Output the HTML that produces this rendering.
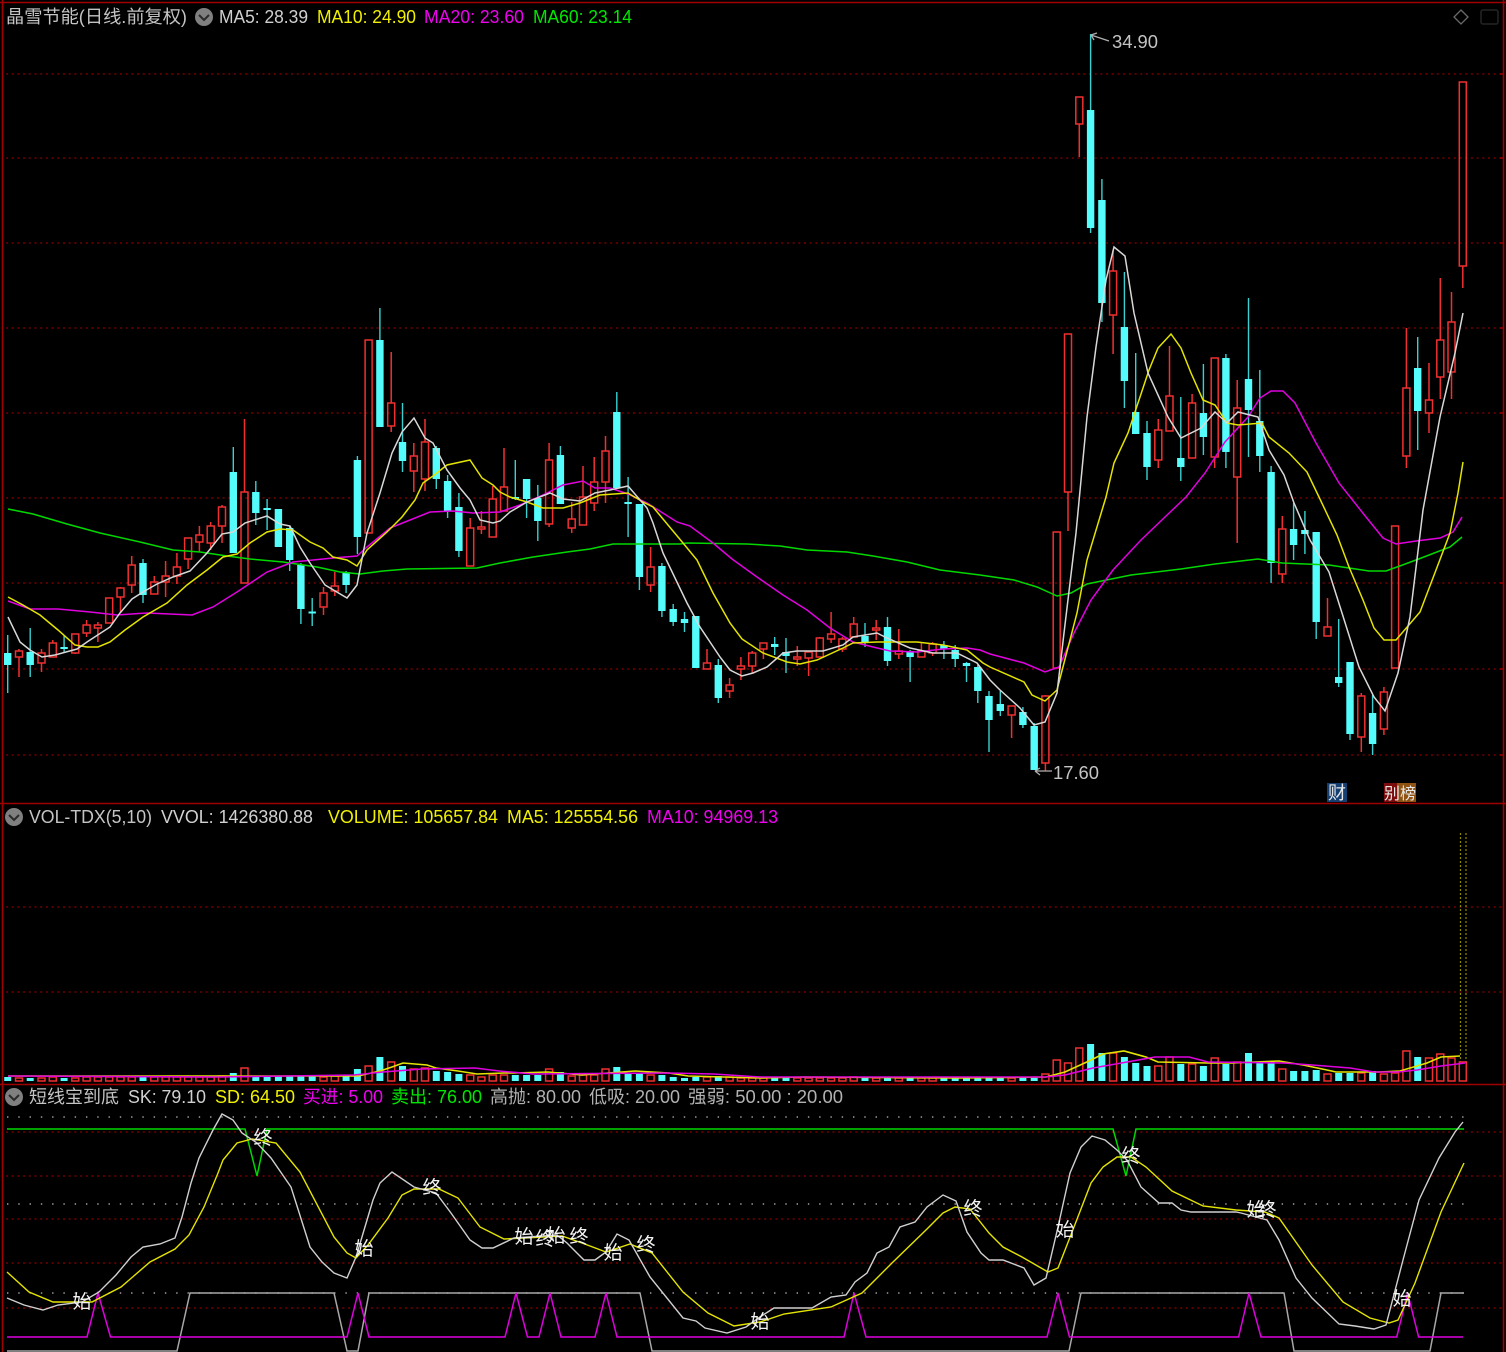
<!DOCTYPE html>
<html lang="zh">
<head>
<meta charset="utf-8">
<title>晶雪节能</title>
<style>
html,body{margin:0;padding:0;background:#000;width:1506px;height:1352px;overflow:hidden}
svg{position:absolute;left:0;top:0;display:block;filter:blur(.35px)}
text{font-family:"Liberation Sans","Noto Sans CJK SC",sans-serif;font-size:18px}
.g{fill:#c4c4c4}.y{fill:#f0f000}.m{fill:#f000f0}.n{fill:#00e800}
.t{font-size:19px;fill:#f4f4f4;text-anchor:middle}
</style>
</head>
<body>
<svg width="1506" height="1352" viewBox="0 0 1506 1352" xmlns="http://www.w3.org/2000/svg">
<rect width="1506" height="1352" fill="#000"/>
<!-- grid -->
<path fill="none" stroke="#8c0000" stroke-width="1.2" stroke-dasharray="2 3.7" d="M6 74H1504M6 158H1504M6 243H1504M6 328H1504M6 413H1504M6 498H1504M6 583H1504M6 669H1504M6 755H1504M6 907H1504M6 992H1504M6 1132H1504M6 1176H1504M6 1219H1504M6 1263H1504M6 1308H1504"/>
<path fill="none" stroke="#a0a0a0" stroke-width="1.4" stroke-dasharray="1.4 9.88" d="M7 1117H1464M7 1204H1464M7 1293H1464"/>
<!-- frame -->
<path fill="none" stroke="#a00000" stroke-width="1.6" d="M0 2.5H1506M2.5 0V1352M1503.5 0V1352M0 803.5H1506M0 1084.5H1506"/>
<path fill="none" stroke="#a00000" stroke-width="1.4" d="M1500 74H1504M1500 158H1504M1500 243H1504M1500 328H1504M1500 413H1504M1500 498H1504M1500 583H1504M1500 669H1504M1500 755H1504"/>

<!-- cyan wicks -->
<path fill="none" stroke="#38d0d0" stroke-width="1.4" d="M7.7 635V693M30.2 628V677M64.1 635V652M143 559V603M233.3 447V553M255.8 481V525M267.1 499V530M278.4 509V547M289.7 526V571M300.9 563V624M312.2 598V626M346.1 571V593M357.4 456V554M379.9 308V427M402.5 403V472M436.3 446V489M447.6 475V518M458.9 493V557M515.3 460V500M526.6 479V518M537.8 485V541M560.4 446V504M616.8 392V488M628.1 477V537M639.4 504V590M661.9 563V617M673.2 604V626M684.5 612V632M695.8 616V668M718.3 659V703M774.7 637V655M786 638V673M865 623V647M887.5 617V666M910.1 650V682M943.9 641V659M955.2 645V667M966.5 662V682M977.8 665V703M989 691V752M1000.3 691V716M1022.9 707V728M1034.2 723V770M1090.6 34V233M1101.9 179V322M1124.4 272V408M1135.7 353V434M1147 421V480M1180.8 397V481M1203.4 364V455M1225.9 354V468M1248.5 298V457M1259.8 370V472M1271.1 466V583M1293.6 503V560M1304.9 511V554M1316.2 532V639M1338.7 619V687M1350 662V740M1372.6 695V755M1417.7 337V450"/>
<!-- cyan bodies -->
<path fill="none" stroke="#54fcfc" stroke-width="7.4" d="M7.7 653V665M30.2 652V665M64.1 647V649M143 563V595M233.3 472V553M255.8 492V513M267.1 508V510M278.4 509V547M289.7 528V560M300.9 565V609M312.2 611.500V613.500M346.1 572V585M357.4 460V537M379.9 340V427M402.5 442V461M436.3 448V479M447.6 481V511M458.9 507V551M515.3 497V499M526.6 479V499M537.8 498V521M560.4 455V504M616.8 412V488M628.1 502V504M639.4 504V577M661.9 566V611M673.2 609V622M684.5 619V623M695.8 616V668M718.3 665V698M774.7 644V647M786 652V656M865 636V642M887.5 627V661M910.1 651V657M943.9 645V649M955.2 650V659M966.5 663V666M977.8 667V691M989 696V720M1000.3 704V711M1022.9 712V725M1034.2 726V770M1090.6 110V228M1101.9 200V303M1124.4 327V381M1135.7 412V434M1147 433V467M1180.8 458V467M1203.4 413V437M1225.9 358V452M1248.5 379V410M1259.8 421V456M1271.1 472V563M1293.6 529V545M1304.9 530V534M1316.2 532V622M1338.7 677V683M1350 662V734M1372.6 713V744M1417.7 368V411"/>
<!-- red candles -->
<path fill="none" stroke="#f03030" stroke-width="1.5" d="M19 649V651M19 657V677M19 651h3.5V657h-7V651h3.5M41.5 649V653M41.5 663V672M41.5 653h3.500V663h-7V653h3.500M52.800 640V643M52.800 643h3.500V657h-7V643h3.500M75.300 653V654M75.300 634h3.500V653h-7V634h3.500M86.600 620V625M86.600 633V637M86.600 625h3.500V633h-7V625h3.500M97.900 622V625M97.900 628V642M97.900 625h3.500V628h-7V625h3.500M109.200 598h3.500V623h-7V598h3.500M120.500 587V588M120.500 597V613M120.500 588h3.500V597h-7V588h3.500M131.700 556V565M131.700 585V593M131.700 565h3.500V585h-7V565h3.500M154.300 576V582M154.300 582h3.500V594h-7V582h3.500M165.600 561V576M165.600 582V597M165.600 576h3.500V582h-7V576h3.500M176.900 553V567M176.900 576V584M176.900 567h3.500V576h-7V567h3.500M188.100 559V569M188.100 538h3.500V559h-7V538h3.500M199.400 526V535M199.400 542V552M199.400 535h3.500V542h-7V535h3.500M210.700 522V526M210.700 543V550M210.700 526h3.500V543h-7V526h3.500M222 505V507M222 526V543M222 507h3.500V526h-7V507h3.500M244.500 419V492M244.500 492h3.500V583h-7V492h3.500M323.500 587V593M323.500 607V615M323.500 593h3.500V607h-7V593h3.500M334.800 572V586M334.800 591V596M334.800 586h3.500V591h-7V586h3.500M368.600 340h3.500V533h-7V340h3.500M391.200 352V403M391.200 426V432M391.200 403h3.500V426h-7V403h3.500M413.800 443V456M413.800 471V492M413.800 456h3.500V471h-7V456h3.500M425 419V442M425 479V491M425 442h3.500V479h-7V442h3.500M470.200 518V528M470.200 528h3.500V566h-7V528h3.500M481.400 511V527M481.400 529V534M481.400 527h3.500V529h-7V527h3.500M492.700 486V499M492.700 499h3.500V537h-7V499h3.500M504 448V487M504 487h3.500V511h-7V487h3.500M549.100 443V460M549.100 524V527M549.100 460h3.500V524h-7V460h3.500M571.700 502V519M571.700 528V533M571.700 519h3.500V528h-7V519h3.500M583 466V497M583 497h3.500V525h-7V497h3.500M594.200 457V482M594.200 503V511M594.200 482h3.500V503h-7V482h3.500M605.500 436V451M605.500 482V503M605.500 451h3.500V482h-7V451h3.500M650.600 547V567M650.600 585V592M650.600 567h3.500V585h-7V567h3.500M707 649V663M707 663h3.500V669h-7V663h3.500M729.600 678V685M729.600 691V698M729.600 685h3.500V691h-7V685h3.500M740.900 657V666M740.900 669V680M740.900 666h3.500V669h-7V666h3.500M752.200 651V653M752.200 666V673M752.200 653h3.500V666h-7V653h3.500M763.400 649V659M763.400 643h3.500V649h-7V643h3.500M797.300 646V657M797.300 659V666M797.300 657h3.500V659h-7V657h3.500M808.600 658V676M808.600 652h3.500V658h-7V652h3.500M819.800 637V638M819.800 638h3.500V657h-7V638h3.500M831.100 612V634M831.100 639V643M831.100 634h3.500V639h-7V634h3.500M842.400 637V639M842.400 649V652M842.400 639h3.500V649h-7V639h3.500M853.700 617V624M853.700 624h3.500V637h-7V624h3.500M876.200 620V628M876.200 630V640M876.200 628h3.500V630h-7V628h3.500M898.800 629V651M898.800 654V659M898.800 651h3.500V654h-7V651h3.500M921.400 642V651M921.400 651h3.500V657h-7V651h3.500M932.600 642V644M932.600 653V656M932.600 644h3.500V653h-7V644h3.500M1011.600 715V738M1011.600 706h3.500V715h-7V706h3.500M1045.400 695V696M1045.400 763V771M1045.400 696h3.500V763h-7V696h3.500M1056.700 532h3.500V668h-7V532h3.500M1068 492V531M1068 334h3.500V492h-7V334h3.500M1079.300 124V157M1079.300 97h3.500V124h-7V97h3.500M1113.100 250V271M1113.100 315V354M1113.100 271h3.500V315h-7V271h3.500M1158.300 419V430M1158.300 460V468M1158.300 430h3.500V460h-7V430h3.500M1169.500 346V396M1169.500 396h3.500V431h-7V396h3.500M1192.100 394V403M1192.100 403h3.500V458h-7V403h3.500M1214.700 457V468M1214.700 358h3.500V457h-7V358h3.500M1237.200 380V408M1237.200 477V543M1237.200 408h3.500V477h-7V408h3.500M1282.300 516V529M1282.300 574V583M1282.300 529h3.500V574h-7V529h3.500M1327.500 598V627M1327.500 627h3.500V636h-7V627h3.500M1361.300 693V696M1361.300 737V752M1361.300 696h3.500V737h-7V696h3.500M1383.900 687V692M1383.900 729V735M1383.900 692h3.500V729h-7V692h3.500M1395.100 526h3.500V668h-7V526h3.500M1406.400 328V388M1406.400 456V468M1406.400 388h3.500V456h-7V388h3.500M1429 363V400M1429 413V433M1429 400h3.500V413h-7V400h3.500M1440.300 278V340M1440.300 377V399M1440.300 340h3.500V377h-7V340h3.500M1451.500 292V322M1451.500 372V399M1451.500 322h3.500V372h-7V322h3.500M1462.800 266V288M1462.800 82h3.500V266h-7V82h3.500"/>

<!-- price MAs -->
<polyline fill="none" stroke="#00d800" stroke-width="1.5" points="8,509 33,514 67,524 100,533 140,542 173,550 200,552 227,556 250,559 283,562 317,567 340,572 360,574 383,571 407,569 477,568 500,563 533,557 567,552 590,549 613,544 680,544 687,543 747,544 780,546 807,550 847,552 873,556 907,562 940,570 980,575 1014,580 1037,587 1057,596 1071,593 1087,584 1131,575 1181,569 1215,564 1258,559 1282,563 1329,565 1369,571 1386,571 1416,560 1450,547 1462,537"/>
<polyline fill="none" stroke="#e000e0" stroke-width="1.5" points="8,601 30,609 58,609 90,612 117,615 147,613 192,615 213,607 237,592 267,572 293,562 333,558 357,556 367,547 390,528 410,520 430,512 453,511 473,513 500,512 520,505 543,495 563,485 583,481 595,488 610,488 628,494 647,503 677,522 690,526 713,543 732,559 757,577 783,595 807,610 830,628 853,642 873,647 890,651 917,652 943,649 967,648 980,650 990,654 1024,663 1045,672 1059,667 1074,633 1091,600 1113,570 1141,540 1165,517 1186,497 1205,473 1225,442 1248,417 1260,398 1271,391 1283,391 1295,403 1316,443 1339,483 1366,517 1383,538 1396,544 1416,541 1440,538 1453,532 1462,517"/>
<polyline fill="none" stroke="#e4e400" stroke-width="1.5" points="8,597 23,605 40,615 58,630 75,645 87,647 98,647 110,642 125,630 143,617 167,603 187,585 207,570 223,557 237,554 250,543 267,532 280,529 293,530 310,542 323,548 333,557 347,560 357,566 367,550 387,532 402,517 415,500 423,483 433,476 447,465 470,460 482,478 493,485 500,492 510,497 527,502 543,508 563,508 580,503 600,495 628,493 643,502 653,507 683,543 697,560 713,593 730,623 742,639 763,653 787,662 800,664 817,660 843,648 853,643 877,642 917,642 943,645 967,650 983,663 990,667 1024,682 1032,695 1045,701 1057,690 1064,663 1077,613 1087,560 1106,497 1114,463 1128,433 1149,370 1158,348 1171,334 1181,348 1191,373 1203,400 1215,405 1227,423 1238,425 1262,423 1269,437 1289,453 1307,472 1319,497 1337,535 1349,567 1363,600 1374,628 1384,640 1396,640 1420,612 1436,570 1450,533 1458,493 1463,462"/>
<polyline fill="none" stroke="#d8d8d8" stroke-width="1.5" points="8,617 20,642 30,650 42,657 55,655 77,649 87,642 110,627 120,613 132,599 143,592 157,584 173,577 190,571 207,553 222,534 233,532 245,523 267,516 280,524 290,526 300,547 310,563 325,585 347,598 357,585 367,533 380,493 392,453 402,432 414,418 425,438 433,443 447,470 460,488 470,500 480,520 493,523 500,521 510,512 527,502 550,493 563,499 580,501 595,493 610,490 628,486 647,508 653,523 663,553 687,603 700,627 720,657 730,670 742,676 753,673 767,667 783,653 797,651 823,651 843,645 853,637 877,633 887,638 910,648 933,653 957,653 977,663 990,680 1000,690 1020,708 1034,725 1045,722 1057,693 1064,633 1076,533 1087,417 1096,347 1106,280 1114,247 1125,256 1134,313 1148,373 1168,417 1181,438 1201,428 1215,412 1227,423 1238,412 1258,417 1269,450 1284,475 1294,503 1310,540 1329,572 1342,613 1359,667 1374,697 1385,711 1398,673 1410,617 1423,510 1440,417 1455,353 1463,313"/>

<!-- price labels -->
<path fill="none" stroke="#b0b0b0" stroke-width="1.3" d="M1091 35L1109 41M1091 35l6-2M1091 35l3 5M1035 771H1052M1035 771l5-3M1035 771l5 4"/>
<text class="g" x="1112" y="48" textLength="46" lengthAdjust="spacingAndGlyphs">34.90</text>
<text class="g" x="1053" y="779" textLength="46" lengthAdjust="spacingAndGlyphs">17.60</text>

<!-- badges -->
<rect x="1327" y="783" width="20" height="19" fill="#143f70"/>
<rect x="1384" y="783" width="13" height="19" fill="#7c0c0c"/>
<rect x="1397" y="783" width="19" height="19" fill="#8f5210"/>
<text x="1328" y="799" style="font-size:18px" fill="#e8e8e8">财</text>
<text x="1384" y="799" style="font-size:16px" fill="#e8e8e8" textLength="32" lengthAdjust="spacingAndGlyphs">别榜</text>

<!-- top right icons -->
<path fill="none" stroke="#6a6a6a" stroke-width="1.3" d="M1461 10L1468 17L1461 24L1454 17Z"/>
<rect x="1481" y="10" width="17" height="14" rx="2" fill="none" stroke="#242424" stroke-width="1.5"/>

<!-- volume dotted -->
<path fill="none" stroke="#8c8c00" stroke-width="1.2" stroke-dasharray="2 2" d="M1460.500 833V1062M1466 833V1062"/>
<!-- volume cyan -->
<path fill="none" stroke="#54fcfc" stroke-width="7" d="M7.7 1081V1077M30.2 1081V1078M64.1 1081V1078M143 1081V1077M233.3 1081V1073M255.8 1081V1076M267.1 1081V1076M278.4 1081V1076M289.7 1081V1076M300.9 1081V1076M312.2 1081V1076M346.1 1081V1075M357.4 1081V1069M379.9 1081V1057M402.5 1081V1066M436.3 1081V1071M447.6 1081V1072M458.9 1081V1074M515.3 1081V1075M526.6 1081V1075M537.8 1081V1075M560.4 1081V1072M616.8 1081V1067M628.1 1081V1074M639.4 1081V1073M661.9 1081V1075M673.2 1081V1077M684.5 1081V1078M695.8 1081V1077M718.3 1081V1076M774.7 1081V1078M786 1081V1078M865 1081V1078M887.5 1081V1078M910.1 1081V1077M943.9 1081V1078M955.2 1081V1078M966.5 1081V1078M977.8 1081V1078M989 1081V1078M1000.3 1081V1078M1022.9 1081V1078M1034.2 1081V1078M1090.6 1081V1044M1101.9 1081V1053M1124.4 1081V1057M1135.7 1081V1063M1147 1081V1066M1180.8 1081V1064M1203.4 1081V1066M1225.9 1081V1064M1248.5 1081V1053M1259.8 1081V1062M1271.1 1081V1062M1293.6 1081V1071M1304.9 1081V1071M1316.2 1081V1070M1338.7 1081V1073M1350 1081V1073M1372.6 1081V1071M1417.7 1081V1057"/>
<!-- volume red -->
<path fill="none" stroke="#f03030" stroke-width="1.5" d="M19 1078h3.5V1081h-7V1078h3.5M41.5 1078h3.5V1081h-7V1078h3.5M52.8 1077h3.5V1081h-7V1077h3.5M75.3 1078h3.5V1081h-7V1078h3.5M86.6 1077h3.5V1081h-7V1077h3.5M97.9 1077h3.5V1081h-7V1077h3.5M109.2 1077h3.5V1081h-7V1077h3.5M120.5 1077h3.5V1081h-7V1077h3.5M131.7 1077h3.5V1081h-7V1077h3.5M154.3 1077h3.5V1081h-7V1077h3.5M165.6 1077h3.5V1081h-7V1077h3.5M176.9 1077h3.5V1081h-7V1077h3.5M188.1 1077h3.5V1081h-7V1077h3.5M199.4 1077h3.5V1081h-7V1077h3.5M210.7 1077h3.5V1081h-7V1077h3.5M222 1076h3.5V1081h-7V1076h3.5M244.5 1068h3.5V1081h-7V1068h3.5M323.5 1077h3.5V1081h-7V1077h3.5M334.8 1076h3.5V1081h-7V1076h3.5M368.6 1066h3.5V1081h-7V1066h3.5M391.2 1062h3.5V1081h-7V1062h3.5M413.8 1069h3.5V1081h-7V1069h3.5M425 1068h3.5V1081h-7V1068h3.5M470.2 1075h3.5V1081h-7V1075h3.5M481.4 1077h3.5V1081h-7V1077h3.5M492.7 1075h3.5V1081h-7V1075h3.5M504 1075h3.5V1081h-7V1075h3.5M549.1 1069h3.5V1081h-7V1069h3.5M571.7 1076h3.5V1081h-7V1076h3.5M583 1075h3.5V1081h-7V1075h3.5M594.2 1075h3.5V1081h-7V1075h3.5M605.5 1069h3.5V1081h-7V1069h3.5M650.6 1075h3.5V1081h-7V1075h3.5M707 1077h3.5V1081h-7V1077h3.5M729.6 1077h3.5V1081h-7V1077h3.5M740.9 1078h3.5V1081h-7V1078h3.5M752.2 1078h3.5V1081h-7V1078h3.5M763.4 1078h3.5V1081h-7V1078h3.5M797.3 1078h3.5V1081h-7V1078h3.5M808.6 1078h3.5V1081h-7V1078h3.5M819.8 1078h3.5V1081h-7V1078h3.5M831.1 1078h3.5V1081h-7V1078h3.5M842.4 1078h3.5V1081h-7V1078h3.5M853.7 1077h3.5V1081h-7V1077h3.5M876.2 1078h3.5V1081h-7V1078h3.5M898.8 1078h3.5V1081h-7V1078h3.5M921.4 1078h3.5V1081h-7V1078h3.5M932.6 1078h3.5V1081h-7V1078h3.5M1011.6 1078h3.5V1081h-7V1078h3.5M1045.4 1074h3.5V1081h-7V1074h3.5M1056.7 1060h3.5V1081h-7V1060h3.5M1068 1063h3.5V1081h-7V1063h3.5M1079.3 1048h3.5V1081h-7V1048h3.5M1113.1 1053h3.5V1081h-7V1053h3.5M1158.3 1066h3.5V1081h-7V1066h3.5M1169.5 1057h3.5V1081h-7V1057h3.5M1192.1 1064h3.5V1081h-7V1064h3.5M1214.7 1058h3.5V1081h-7V1058h3.5M1237.2 1062h3.5V1081h-7V1062h3.5M1282.3 1069h3.5V1081h-7V1069h3.5M1327.5 1074h3.5V1081h-7V1074h3.5M1361.3 1073h3.5V1081h-7V1073h3.5M1383.9 1074h3.5V1081h-7V1074h3.5M1395.1 1073h3.5V1081h-7V1073h3.5M1406.4 1051h3.5V1081h-7V1051h3.5M1429 1058h3.5V1081h-7V1058h3.5M1440.3 1054h3.5V1081h-7V1054h3.5M1451.5 1058h3.5V1081h-7V1058h3.5M1462.8 1062h3.5V1081h-7V1062h3.5"/>
<polyline fill="none" stroke="#e4e400" stroke-width="1.6" points="8,1076 80,1076 230,1076 290,1076 358,1076 380,1071 392,1067 403,1063 427,1065 436,1068 458,1071 477,1074 504,1073 514,1073 548,1072 582,1075 635,1071 669,1073 688,1076 760,1078 803,1077 960,1078 1046,1077 1065,1072 1089,1061 1103,1054 1124,1051 1146,1057 1158,1062 1208,1063 1232,1063 1279,1061 1303,1065 1327,1070 1336,1072 1379,1072 1400,1071 1427,1063 1441,1057 1460,1056"/>
<polyline fill="none" stroke="#e000e0" stroke-width="1.6" points="8,1076 218,1077 354,1075 383,1072 422,1069 475,1068 499,1071 533,1074 669,1073 713,1074 760,1077 1046,1077 1065,1075 1093,1068 1127,1062 1155,1057 1189,1057 1208,1062 1284,1063 1312,1065 1350,1068 1374,1072 1398,1072 1417,1070 1441,1066 1465,1063"/>

<!-- indicator lines -->
<polyline fill="none" stroke="#00d800" stroke-width="1.5" points="7,1129 245,1129 257,1176 267,1129 1113,1129 1126,1176 1136,1129 1464,1129"/>
<polyline fill="none" stroke="#a8a8a8" stroke-width="1.5" points="7,1351 177,1351 190,1293 334,1293 347,1351 358,1351 369,1293 640,1293 652,1351 1069,1351 1081,1293 1284,1293 1294,1351 1430,1351 1441,1293 1464,1293"/>
<polyline fill="none" stroke="#e000e0" stroke-width="1.5" points="7,1337 87,1337 98,1293 110.500,1337 347,1337 358,1293 369,1337 505,1337 516,1293 527.500,1337 539,1337 550,1293 561,1337 595,1337 606,1293 617,1337 844,1337 854,1293 866,1337 1047,1337 1058,1293 1069.500,1337 1238.600,1337 1249,1293 1261,1337 1396.700,1337 1407.600,1293 1418.600,1337 1463,1337"/>
<polyline fill="none" stroke="#e4e400" stroke-width="1.4" points="7,1272 29,1292 53,1302 92,1302 121,1287 150,1262 175,1249 189,1235 204,1207 218,1173 223,1160 237,1143 252,1139 276,1143 300,1172 334,1237 347,1253 356,1258 368,1245 388,1218 402,1195 414,1189 439,1189 458,1198 480,1227 504,1239 562,1236 582,1243 606,1252 630,1244 652,1253 683,1292 708,1313 734,1326 760,1322 784,1314 831,1307 862,1293 893,1262 927,1229 943,1213 955,1207 970,1209 989,1233 1003,1247 1022,1257 1048,1272 1058,1268 1074,1227 1091,1183 1103,1167 1117,1157 1131,1157 1146,1167 1172,1191 1203,1206 1236,1210 1265,1212 1279,1218 1312,1265 1343,1302 1370,1318 1389,1323 1398,1320 1415,1283 1441,1212 1464,1163"/>
<polyline fill="none" stroke="#d0d0d0" stroke-width="1.4" points="7,1298 24,1305 43,1310 58,1305 82,1302 99,1292 116,1275 131,1257 143,1247 160,1244 175,1238 182,1217 191,1183 199,1158 213,1130 222,1114 233,1120 242,1133 257,1143 271,1158 291,1187 310,1247 322,1262 334,1273 347,1278 356,1257 373,1200 380,1183 392,1172 414,1187 436,1193 451,1213 470,1240 482,1248 493,1248 514,1238 557,1235 567,1243 584,1260 595,1260 606,1252 617,1234 629,1240 650,1277 683,1318 696,1321 705,1328 727,1333 746,1327 760,1317 774,1308 812,1308 831,1297 846,1295 855,1282 867,1273 877,1253 889,1247 900,1227 915,1222 927,1207 943,1195 956,1201 967,1232 981,1253 989,1260 1003,1260 1024,1268 1034,1285 1046,1278 1058,1227 1070,1173 1081,1147 1092,1136 1105,1140 1117,1150 1127,1160 1141,1187 1159,1203 1172,1203 1181,1210 1191,1212 1208,1212 1236,1212 1241,1213 1267,1220 1279,1240 1296,1278 1312,1298 1339,1324 1355,1326 1374,1329 1386,1325 1403,1260 1419,1200 1439,1158 1455,1132 1463,1122"/>

<!-- markers -->
<text class="t" x="82" y="1308">始</text>
<text class="t" x="263" y="1144">终</text>
<text class="t" x="364" y="1255">始</text>
<text class="t" x="432" y="1194">终</text>
<text class="t" x="524" y="1243">始</text>
<text class="t" x="545" y="1245">终</text>
<text class="t" x="556" y="1242">始</text>
<text class="t" x="579" y="1243">终</text>
<text class="t" x="613" y="1259">始</text>
<text class="t" x="646" y="1251">终</text>
<text class="t" x="760" y="1328">始</text>
<text class="t" x="973" y="1215">终</text>
<text class="t" x="1065" y="1236">始</text>
<text class="t" x="1131" y="1162">终</text>
<text class="t" x="1256" y="1216">始</text>
<text class="t" x="1267" y="1216">终</text>
<text class="t" x="1402" y="1305">始</text>

<!-- header 1 -->
<text class="g" x="6" y="23" textLength="181" lengthAdjust="spacingAndGlyphs">晶雪节能(日线.前复权)</text>
<circle cx="204" cy="17" r="9" fill="#808080"/>
<path fill="none" stroke="#2a2a2a" stroke-width="2" d="M199 15l5 5l5-5"/>
<text x="219" y="23" textLength="89" lengthAdjust="spacingAndGlyphs" fill="#d0d0d0">MA5: 28.39</text>
<text class="y" x="317" y="23" textLength="99" lengthAdjust="spacingAndGlyphs">MA10: 24.90</text>
<text class="m" x="424" y="23" textLength="100" lengthAdjust="spacingAndGlyphs">MA20: 23.60</text>
<text class="n" x="533" y="23" textLength="99" lengthAdjust="spacingAndGlyphs">MA60: 23.14</text>

<!-- header 2 -->
<circle cx="14" cy="817" r="9" fill="#808080"/>
<path fill="none" stroke="#2a2a2a" stroke-width="2" d="M9 815l5 5l5-5"/>
<text class="g" x="29" y="823" textLength="123" lengthAdjust="spacingAndGlyphs">VOL-TDX(5,10)</text>
<text x="161" y="823" textLength="152" lengthAdjust="spacingAndGlyphs" fill="#d0d0d0">VVOL: 1426380.88</text>
<text class="y" x="328" y="823" textLength="170" lengthAdjust="spacingAndGlyphs">VOLUME: 105657.84</text>
<text class="y" x="507" y="823" textLength="131" lengthAdjust="spacingAndGlyphs">MA5: 125554.56</text>
<text class="m" x="647" y="823" textLength="131" lengthAdjust="spacingAndGlyphs">MA10: 94969.13</text>

<!-- header 3 -->
<circle cx="14" cy="1097" r="9" fill="#808080"/>
<path fill="none" stroke="#2a2a2a" stroke-width="2" d="M9 1095l5 5l5-5"/>
<text class="g" x="29" y="1103" textLength="90" lengthAdjust="spacingAndGlyphs">短线宝到底</text>
<text x="128" y="1103" textLength="78" lengthAdjust="spacingAndGlyphs" fill="#d0d0d0">SK: 79.10</text>
<text class="y" x="215" y="1103" textLength="80" lengthAdjust="spacingAndGlyphs">SD: 64.50</text>
<text class="m" x="303" y="1103" textLength="80" lengthAdjust="spacingAndGlyphs">买进: 5.00</text>
<text class="n" x="391" y="1103" textLength="91" lengthAdjust="spacingAndGlyphs">卖出: 76.00</text>
<text class="g" x="490" y="1103" textLength="91" lengthAdjust="spacingAndGlyphs" fill-opacity=".9">高抛: 80.00</text>
<text class="g" x="589" y="1103" textLength="91" lengthAdjust="spacingAndGlyphs" fill-opacity=".9">低吸: 20.00</text>
<text class="g" x="688" y="1103" textLength="155" lengthAdjust="spacingAndGlyphs" fill-opacity=".9">强弱: 50.00 : 20.00</text>
</svg>
</body>
</html>
